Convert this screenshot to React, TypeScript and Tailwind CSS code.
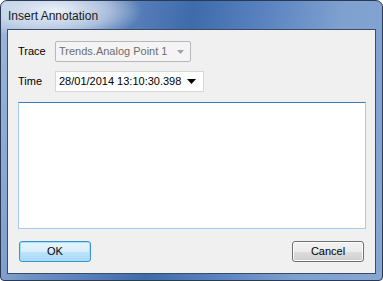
export default function App() {
  return (
    <div className="w-[383px] h-[281px] bg-white">
      <div className="w-[383px] h-[281px] rounded-t-[7px] rounded-b-[4px] border border-[#2b3a52] bg-[linear-gradient(100deg,#9db8dc_0%,#6f92c6_18%,#3f6bab_45%,#5a83c0_62%,#7fa1d0_80%,#86a6d3_100%)] flex flex-col font-['Liberation_Sans',Arial,sans-serif] text-[11px] text-black relative overflow-hidden">
        <div className="absolute left-[-30px] top-[-20px] w-[170px] h-[60px] rounded-full bg-[radial-gradient(ellipse_at_center,rgba(255,255,255,0.85)_0%,rgba(255,255,255,0.45)_45%,rgba(255,255,255,0)_72%)]" />
        <div className="h-[28px] pl-[7px] pt-[5px] relative leading-[20px] text-[12px] text-[#1a1a1a] whitespace-nowrap">
          Insert Annotation
        </div>
        <div className="mx-[6px] mb-[6px] flex-1 border border-[#3b4c66] bg-[#f0f0f0] relative flex flex-col pl-[10px] pr-[9px] pt-[11px]">
          <div className="flex items-center h-[21px]">
            <span className="w-[37px]">Trace</span>
            <div className="w-[136px] h-[21px] border border-[#b5b8bc] rounded-[2px] bg-[#f4f4f4] flex items-center pl-[3px] pr-[6px] text-[#6d6d6d] whitespace-nowrap">
              <span className="flex-1 leading-none">Trends.Analog Point 1</span>
              <svg width="7" height="4" viewBox="0 0 7 4">
                <path d="M0 0h7L3.5 4z" fill="#a0a0a0" />
              </svg>
            </div>
          </div>
          <div className="flex items-center h-[21px] mt-[9px]">
            <span className="w-[37px]">Time</span>
            <div className="w-[149px] h-[21px] border border-[#d5d7da] bg-white flex items-center pl-[3px] pr-[7px] whitespace-nowrap">
              <span className="flex-1 leading-none">28/01/2014 13:10:30.398</span>
              <svg width="9" height="5" viewBox="0 0 9 5">
                <path d="M0 0h9L4.5 5z" fill="#000" />
              </svg>
            </div>
          </div>
          <div className="mt-[10px] h-[127px] border border-[#a7cbe8] border-t-[#3d7bb4] bg-white" />
          <div className="flex justify-between mt-[12px] pl-[1px] pr-[2px]">
            <button className="w-[72px] h-[21px] rounded-[3px] border border-[#3c8fd0] bg-[linear-gradient(#e9f5fd_0%,#d7eefc_50%,#bde3fa_51%,#a8d9f8_100%)] shadow-[inset_0_0_0_1px_#9ee2fb] leading-none">
              OK
            </button>
            <button className="w-[72px] h-[21px] rounded-[3px] border border-[#707070] bg-[linear-gradient(#f2f2f2_0%,#ebebeb_50%,#dddddd_51%,#cfcfcf_100%)] shadow-[inset_0_0_0_1px_#fcfcfc] leading-none">
              Cancel
            </button>
          </div>
        </div>
      </div>
    </div>
  );
}
